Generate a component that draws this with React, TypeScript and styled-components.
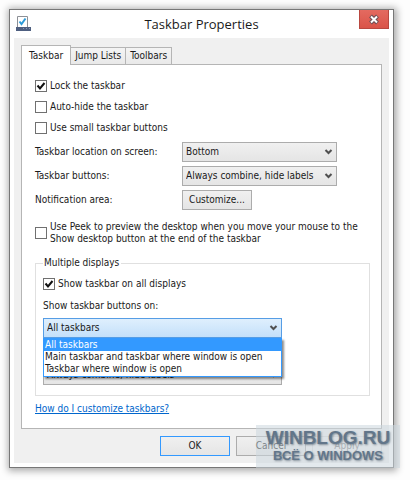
import React, { useState } from "react";
import styled, { createGlobalStyle, css } from "styled-components";

const GlobalStyle = createGlobalStyle`
  *, *::before, *::after { box-sizing: border-box; }
  body {
    margin: 0;
    background: #fdfdfd;
    color: #1a1a1a;
    font: 10px/12px "DejaVu Sans Condensed", "Noto Sans", sans-serif;
  }
  button, select, input { font: inherit; color: inherit; margin: 0; }
`;

const Page = styled.main`
  position: relative;
  padding: 9px 16px 11px 9px;
`;

const Dialog = styled.section`
  padding: 0 4px 4px;
  border: 1px solid #777;
  background: #fff;
  box-shadow: 1px 1px 7px 2px rgba(0, 0, 0, 0.32);
`;

const TitleBar = styled.header`
  display: grid;
  grid-template-columns: 30px 1fr 30px;
  align-items: start;
  height: 28px;
`;

const AppIcon = styled.svg`
  width: 16px;
  height: 16px;
  margin: 6px 0 0 2px;
`;

const Title = styled.h1`
  margin: 0;
  font: 400 13px/28px "Open Sans", "Noto Sans", sans-serif;
  text-align: center;
`;

const CloseButton = styled.button`
  display: grid;
  place-items: center;
  height: 19px;
  padding: 0;
  border: 1px solid #b94840;
  border-top: 0;
  background: linear-gradient(#e46a60, #da5449);
`;

const Client = styled.div`
  padding: 7px 7px;
  background: #f0f0f0;
`;

const TabList = styled.div`
  display: flex;
  align-items: flex-end;
  height: 19px;
`;

const Tab = styled.button<{ $active: boolean }>`
  height: 17px;
  padding: 0 4px;
  border: 1px solid #b5b5b5;
  border-left-width: 0;
  border-bottom: 0;
  background: linear-gradient(#f4f4f4, #e9e9e9);
  white-space: nowrap;
  ${(p) =>
    p.$active &&
    css`
      position: relative;
      z-index: 1;
      height: 20px;
      margin-bottom: -1px;
      padding: 0 7px;
      border-left-width: 1px;
      background: #fff;
    `}
`;

const Panel = styled.div`
  padding: 14px 11px 11px 13px;
  border: 1px solid #b5b5b5;
  background: #fff;
`;

const CheckLabel = styled.label<{ $spaced?: boolean }>`
  display: flex;
  align-items: center;
  gap: 3px;
  min-height: 13px;
  margin-bottom: ${(p) => (p.$spaced ? 8 : 0)}px;
`;

const CheckBox = styled.span`
  display: grid;
  flex: none;
  width: 12px;
  height: 12px;
  & > * { grid-area: 1 / 1; }
`;

const CheckInput = styled.input`
  appearance: none;
  width: 12px;
  height: 12px;
  border: 1px solid #707070;
  background: #fff;
  & + svg { visibility: hidden; pointer-events: none; }
  &:checked + svg { visibility: visible; }
`;

const Fields = styled.div`
  display: grid;
  grid-template-columns: 147px minmax(0, 155px);
  grid-auto-rows: 20px;
  row-gap: 4px;
  align-items: center;
  margin-bottom: 11px;
`;

const SelectWrap = styled.div`
  display: grid;
  align-items: center;
  & > * { grid-area: 1 / 1; }
  & > svg { justify-self: end; margin-right: 4px; pointer-events: none; }
`;

const Select = styled.select<{ $open?: boolean }>`
  appearance: none;
  width: 100%;
  height: 20px;
  padding: 0 14px 0 3px;
  border: 1px solid ${(p) => (p.$open ? "#569de5" : "#acacac")};
  border-radius: 0;
  outline: none;
  background: ${(p) =>
    p.$open ? "linear-gradient(#dfeffd, #c4e0fa)" : "linear-gradient(#f0f0f0, #e5e5e5)"};
`;

const Button = styled.button<{ $primary?: boolean }>`
  width: 70px;
  height: 20px;
  padding: 0;
  border: 1px solid ${(p) => (p.$primary ? "#3399ff" : "#acacac")};
  background: linear-gradient(#f0f0f0, #e5e5e5);
  &:disabled { color: #838383; border-color: #d9d9d9; background: #efefef; }
`;

const Group = styled.fieldset`
  min-width: 0;
  margin: 12px 0 5px;
  padding: 8px 8px 10px 7px;
  border: 1px solid #e0e0e0;
`;

const Legend = styled.legend`
  padding: 0 2px 0 1px;
`;

const DisplayOptions = styled.div`
  display: flex;
  flex-direction: column;
  width: 239px;
  max-width: 100%;
`;

const FieldLabel = styled.label`
  margin: 10px 0 6px;
`;

const DropDown = styled.div`
  position: relative;
  margin-bottom: 27px;
`;

const OptionList = styled.ul`
  position: absolute;
  z-index: 2;
  top: 100%;
  left: 0;
  right: 0;
  margin: 0;
  padding: 0 0 1px;
  border: 1px solid #3399ff;
  background: #fff;
  box-shadow: 2px 2px 2px rgba(0, 0, 0, 0.45);
  list-style: none;
`;

const Option = styled.li<{ $selected: boolean }>`
  padding: 0 1px;
  line-height: 12px;
  white-space: nowrap;
  color: ${(p) => (p.$selected ? "#fff" : "inherit")};
  background: ${(p) => (p.$selected ? "#3399ff" : "transparent")};
`;

const HelpLink = styled.a`
  color: #0066cc;
  line-height: 16px;
`;

const Actions = styled.footer`
  display: flex;
  justify-content: flex-end;
  gap: 6px;
  padding-top: 7px;
`;

const Watermark = styled.aside`
  position: absolute;
  z-index: 3;
  right: 10px;
  bottom: 11px;
  width: 144px;
  padding: 3px 0 5px;
  background: rgba(204, 215, 223, 0.55);
  color: #62768a;
  font-family: "Liberation Sans", sans-serif;
  font-weight: 700;
  text-align: center;
  text-shadow: 1px 1px 2px rgba(70, 85, 100, 0.6);
  pointer-events: none;
`;

const SiteName = styled.div`
  font-size: 19px;
  line-height: 20px;
`;

const SiteMotto = styled.div`
  font-size: 13px;
  line-height: 15px;
`;

const Chevron = () => (
  <svg width="9" height="8" viewBox="0 0 9 8" aria-hidden="true">
    <path d="M1.5 2L4.5 5L7.5 2" fill="none" stroke="#505050" strokeWidth="2" />
  </svg>
);

function Check({
  children,
  checked,
  spaced,
}: {
  children: React.ReactNode;
  checked?: boolean;
  spaced?: boolean;
}) {
  return (
    <CheckLabel $spaced={spaced}>
      <CheckBox>
        <CheckInput type="checkbox" defaultChecked={checked} />
        <svg width="12" height="12" viewBox="0 0 12 12" aria-hidden="true">
          <path d="M2.5 5.5L5 8.5L9.5 3" fill="none" stroke="#111" strokeWidth="2" />
        </svg>
      </CheckBox>
      <span>{children}</span>
    </CheckLabel>
  );
}

const tabs = ["Taskbar", "Jump Lists", "Toolbars"];
const choices = [
  "All taskbars",
  "Main taskbar and taskbar where window is open",
  "Taskbar where window is open",
];

export default function App() {
  const [tab, setTab] = useState(tabs[0]);
  const [choice, setChoice] = useState(choices[0]);

  return (
    <Page>
      <GlobalStyle />
      <Dialog role="dialog" aria-labelledby="title">
        <TitleBar>
          <AppIcon viewBox="0 0 16 16" aria-hidden="true">
            <path d="M1.5 11V.5H11.5V11" fill="#fff" stroke="#8d9096" />
            <path d="M3.5 5.5L5.5 8L9.5 2.5" fill="none" stroke="#2d9bd8" strokeWidth="2" />
            <path d="M0 11H15V15H0Z" fill="#4e5f80" />
            <path d="M7 12.5H8M10 12.5H11M13 12.5H14" stroke="#8796b2" />
          </AppIcon>
          <Title id="title">Taskbar Properties</Title>
          <CloseButton aria-label="Close">
            <svg width="12" height="11" viewBox="0 0 12 11" aria-hidden="true">
              <path d="M2.5 2L9.5 9M9.5 2L2.5 9" stroke="#6c4e55" strokeWidth="4" />
              <path d="M3 2.5L9 8.5M9 2.5L3 8.5" stroke="#fff" strokeWidth="2" />
            </svg>
          </CloseButton>
        </TitleBar>
        <Client>
          <TabList role="tablist">
            {tabs.map((name) => (
              <Tab
                key={name}
                role="tab"
                aria-selected={name === tab}
                $active={name === tab}
                onClick={() => setTab(name)}
              >
                {name}
              </Tab>
            ))}
          </TabList>
          <Panel role="tabpanel">
            <Check checked spaced>Lock the taskbar</Check>
            <Check spaced>Auto-hide the taskbar</Check>
            <Check spaced>Use small taskbar buttons</Check>
            <Fields>
              <label htmlFor="location">Taskbar location on screen:</label>
              <SelectWrap>
                <Select id="location">
                  <option>Bottom</option>
                </Select>
                <Chevron />
              </SelectWrap>
              <label htmlFor="combine">Taskbar buttons:</label>
              <SelectWrap>
                <Select id="combine">
                  <option>Always combine, hide labels</option>
                </Select>
                <Chevron />
              </SelectWrap>
              <label htmlFor="notify">Notification area:</label>
              <Button id="notify">Customize...</Button>
            </Fields>
            <Check>
              Use Peek to preview the desktop when you move your mouse to the Show desktop
              button at the end of the taskbar
            </Check>
            <Group>
              <Legend>Multiple displays</Legend>
              <DisplayOptions>
                <Check checked>Show taskbar on all displays</Check>
                <FieldLabel htmlFor="show-on">Show taskbar buttons on:</FieldLabel>
                <DropDown>
                  <SelectWrap>
                    <Select
                      id="show-on"
                      $open
                      value={choice}
                      onChange={(e) => setChoice(e.target.value)}
                    >
                      {choices.map((c) => (
                        <option key={c}>{c}</option>
                      ))}
                    </Select>
                    <Chevron />
                  </SelectWrap>
                  <OptionList role="listbox" aria-label="Show taskbar buttons on">
                    {choices.map((c) => (
                      <Option
                        key={c}
                        role="option"
                        aria-selected={c === choice}
                        $selected={c === choice}
                        onClick={() => setChoice(c)}
                      >
                        {c}
                      </Option>
                    ))}
                  </OptionList>
                </DropDown>
                <SelectWrap>
                  <Select aria-label="Buttons on other taskbars">
                    <option>Always combine, hide labels</option>
                  </Select>
                  <Chevron />
                </SelectWrap>
              </DisplayOptions>
            </Group>
            <HelpLink href="#help">How do I customize taskbars?</HelpLink>
          </Panel>
          <Actions>
            <Button $primary>OK</Button>
            <Button>Cancel</Button>
            <Button disabled>Apply</Button>
          </Actions>
        </Client>
      </Dialog>
      <Watermark>
        <SiteName>WINBLOG.RU</SiteName>
        <SiteMotto>ВСЁ О WINDOWS</SiteMotto>
      </Watermark>
    </Page>
  );
}
